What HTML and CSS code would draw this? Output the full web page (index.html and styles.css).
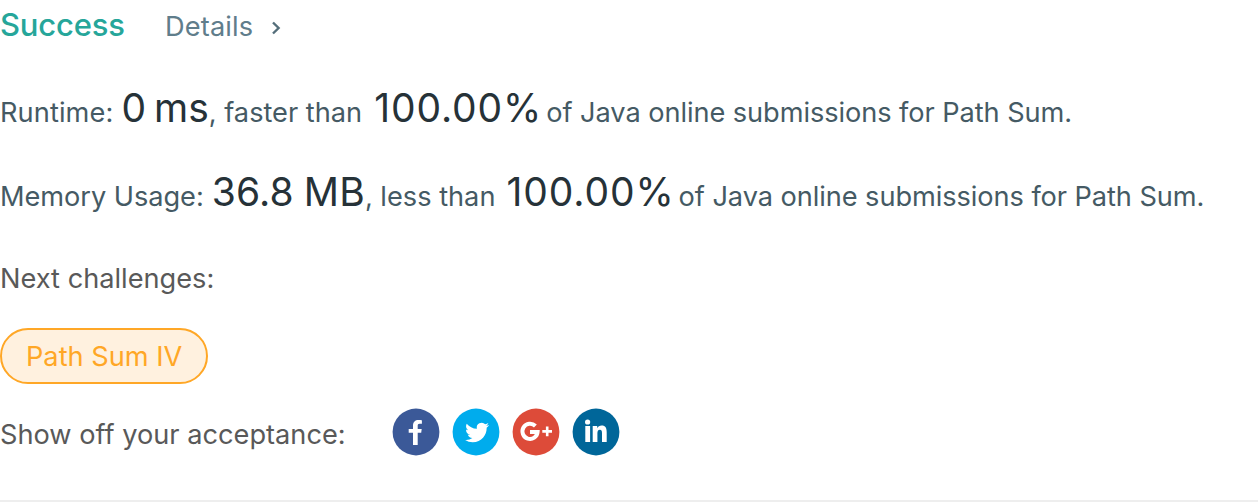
FILE: index.html
```html
<!DOCTYPE html>
<html lang="en">
<head>
<meta charset="utf-8">
<title>Submission result</title>
<link rel="stylesheet" href="styles.css">
</head>
<body>
<main class="result">
  <header class="status">
    <span class="status-text">Success</span>
    <a class="details">Details
      <svg class="chevron" width="10" height="14" viewBox="0 0 10 14"><path d="M2 1.500 7.600 7 2 12.500"/></svg>
    </a>
  </header>
  <p class="stat runtime"><span class="label">Runtime:</span><span class="value">0 ms</span><span class="compare">, faster than</span><span class="value percent">100.00%</span><span class="tail">of Java online submissions for Path Sum.</span></p>
  <p class="stat memory"><span class="label">Memory Usage:</span><span class="value">36.8 MB</span><span class="compare">, less than</span><span class="value percent">100.00%</span><span class="tail">of Java online submissions for Path Sum.</span></p>
  <p class="next">Next challenges:</p>
  <div class="challenges"><a class="challenge"><span>Path Sum IV</span></a></div>
  <footer class="share">
    <span class="share-label">Show off your acceptance:</span>
    <div class="socials">
      <svg class="social" viewBox="0 0 48 48"><circle cx="24" cy="24" r="23.4" fill="#3b5998"/><path fill="#fff" d="M21 37V24.8h-4.3V21H21v-3.2c0-4 2.200-5.800 5.500-5.800 1.500 0 2.800.1 3.400.2v3.600h-2.300c-1.500 0-1.900.9-1.900 2V21h4l-.5 3.800h-3.500V37z"/></svg>
      <svg class="social" viewBox="0 0 48 48"><circle cx="24" cy="24" r="23.4" fill="#00aced"/><path fill="#fff" transform="translate(13.1 12.500)" d="M23.953 4.570a10 10 0 01-2.825.775 4.958 4.958 0 002.163-2.723c-.951.555-2.005.959-3.127 1.184a4.920 4.920 0 00-8.384 4.482C7.690 8.095 4.067 6.130 1.640 3.162a4.822 4.822 0 00-.666 2.475c0 1.710.870 3.213 2.188 4.096a4.904 4.904 0 01-2.228-.616v.060a4.923 4.923 0 003.946 4.827 4.996 4.996 0 01-2.212.085 4.936 4.936 0 004.604 3.417 9.867 9.867 0 01-6.102 2.105c-.390 0-.779-.023-1.170-.067a13.995 13.995 0 007.557 2.209c9.053 0 13.998-7.496 13.998-13.985 0-.210 0-.420-.015-.630A9.935 9.935 0 0024 4.590z"/></svg>
      <svg class="social" viewBox="0 0 48 48"><circle cx="24" cy="24" r="23.4" fill="#dd4b39"/><path fill="none" stroke="#fff" stroke-width="4" d="M23.400 18A7.600 7.600 0 1 0 25.600 23.900H18"/><path fill="none" stroke="#fff" stroke-width="2.600" d="M35.200 18.500v9.700M30.300 23.350h9.700"/></svg>
      <svg class="social" viewBox="0 0 48 48"><circle cx="24" cy="24" r="23.4" fill="#006699"/><g fill="#fff"><circle cx="15.600" cy="14" r="2.600"/><rect x="13.300" y="18" width="4.800" height="16"/><path d="M20.700 18h4.500v2.200c.9-1.600 2.400-2.600 4.400-2.600 4 0 5.100 2.600 5.100 6.600V34h-4.700v-8.700c0-2.200-.3-3.600-2.100-3.600-2 0-2.500 1.500-2.500 3.600V34h-4.700z"/></g></svg>
    </div>
  </footer>
</main>
</body>
</html>
```
FILE: styles.css
```css
* { box-sizing: border-box; }
body { margin: 0; background: #fff; font-family: Inter, "Liberation Sans", sans-serif; font-size: 27.2px; color: #595959; }
p { margin: 0; }
.result { height: 502px; border-bottom: 2px solid #eee; white-space: nowrap; }
.status { display: flex; align-items: flex-start; height: 52px; }
.status-text { width: 165px; font-size: 31px; font-weight: 500; line-height: 50px; letter-spacing: -0.2px; color: #26a69a; }
.details { display: flex; align-items: center; gap: 18px; line-height: 54px; letter-spacing: 0.15px; color: #607d8b; }
.chevron { fill: none; stroke: #546e7a; stroke-width: 2.4; margin-top: 2px; }
.stat { display: flex; align-items: baseline; height: 84px; line-height: 83px; color: #455a64; }
.runtime { margin-top: 14px; }
.label { letter-spacing: -0.05px; }
.runtime .label { letter-spacing: 0.1px; }
.value { font-size: 39px; letter-spacing: 0.15px; word-spacing: -1px; color: #263238; margin-left: 8px; }
.runtime .value { letter-spacing: 0; word-spacing: -3px; }
.stat .percent { letter-spacing: 0.9px; margin-left: 12px; }
.memory .percent { margin-left: 11px; }
.tail { margin-left: 4px; letter-spacing: -0.07px; }
.next { line-height: 52px; margin-top: 19px; }
.challenges { display: flex; margin-top: 23px; }
.challenge { width: 208px; height: 56px; padding-left: 24px; border: 2px solid #ffa726; border-radius: 28px; background: #fff1df; color: #ffa726; line-height: 54px; }
.share { display: flex; align-items: center; margin-top: 24px; height: 48px; }
.share-label { width: 392px; line-height: 49px; padding-top: 4px; }
.socials { display: flex; gap: 12px; }
.social { width: 48px; height: 48px; }
```
